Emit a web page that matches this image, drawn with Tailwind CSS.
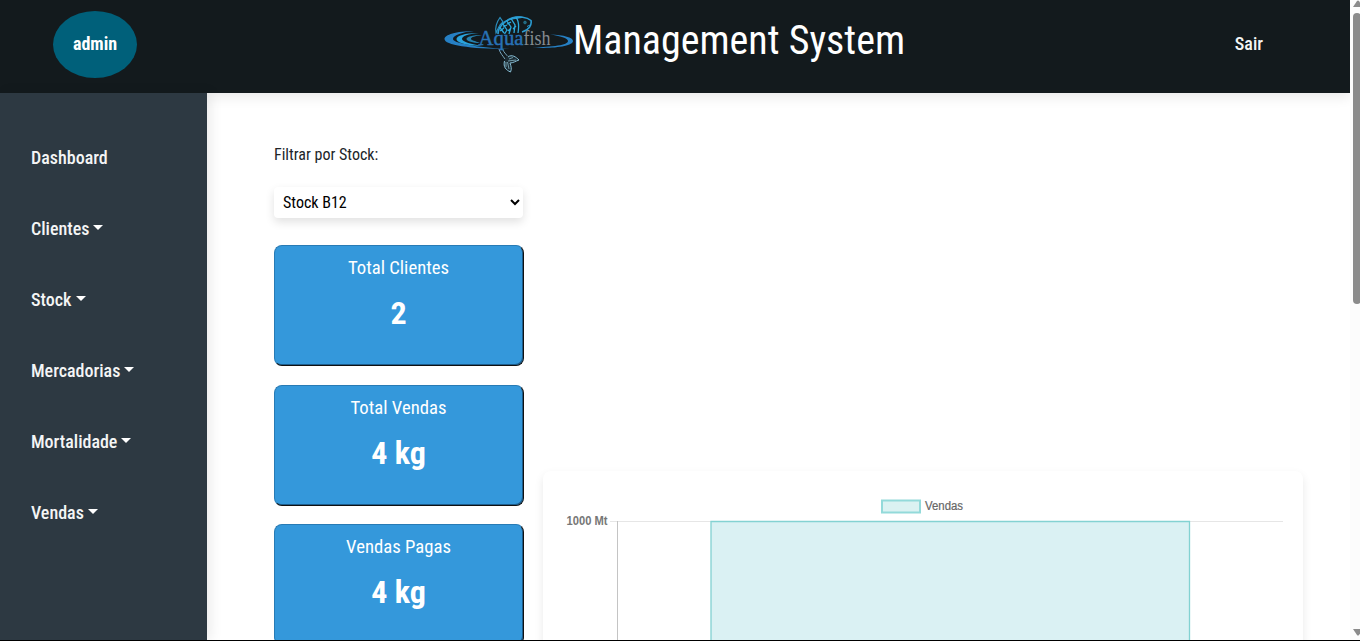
<!DOCTYPE html>
<html lang="pt">
<head>
<meta charset="utf-8">
<title>Management System</title>
<script src="https://cdn.jsdelivr.net/npm/@tailwindcss/browser@4"></script>
</head>
<body class="h-[641px] overflow-hidden bg-white font-['Roboto_Condensed','Roboto',sans-serif] [font-stretch:75%] text-[#212529]">
<div class="flex h-[641px] w-[1360px] border-b border-black">
  <div class="flex w-[1350px] flex-col overflow-hidden">
    <header class="relative z-10 flex h-[93px] shrink-0 bg-[#131a1d] pl-[53px] text-white shadow-[0_4px_12px_rgba(0,0,0,0.09)]">
      <div class="mt-[11px] flex h-[67px] w-[84px] items-center justify-center rounded-[50%] bg-[#00607a] pb-[2px] text-[18px] font-bold"><span>admin</span></div>
      <div class="ml-[306px] flex">
        <svg class="mt-3 h-[64px] w-[130px]" viewBox="443 12 130 64" fill="none">
          <path d="M474 31C456 31 444.500 35 444.500 39C444.500 45 469 49 510 49C485 48 453 44 453 39C453 35 463 32 474 31Z" fill="#2680c4"/>
          <path d="M479 33C464 33 456.500 36 456.500 39C456.500 43 469 46 482 46C472 44 462 42 462 39C462 36 468 34 479 33Z" fill="#2aa3dc"/>
          <path d="M482 35C472 35 466.500 37 466.500 39C466.500 41 473 43 480 43C475 41 471 40 471 39C471 37 475 36 482 35Z" fill="#2580ad"/>
          <path d="M550 34.500C564 35 573 37.500 573 41C573 46 554 49 532 47.500C553 47 568 45 568 41C568 38 560 36 550 34.500Z" fill="#2680c4"/>
          <path d="M498 34C498 28 503 21 512 18.500C519 16 527 17 531 20.500C532 25 529 30 522 32" stroke="#2b9bd1" stroke-width="1.600"/>
          <path d="M496 33C495 28 496 23 500 17.500L503 22L500 25C498 28 497 31 496 33Z" stroke="#2b8fbf" stroke-width="1.200"/>
          <path d="M506 21C509 17 517 14.500 525 17.500L512 19.500Z" fill="#2b9bd1"/>
          <path d="M499.500 27L504 33M502.500 23.500L507 30L504.500 34M506.500 20.500L511 27L509 34M511 18.500L515 25L514 33M500 31L504 28M503 27L507 25M507 24L511 22M508 31L511 28M513 29L516 26M516 17.500C519 21 519 27 518 33" stroke="#2ca9dc" stroke-width="1.300"/>
          <path d="M527 26.500L531 24.500" stroke="#2b9bd1" stroke-width="1"/>
          <circle cx="525" cy="22.500" r="1.400" fill="#24657c" stroke="#2489a8" stroke-width=".5"/>
          <path d="M499 49C500 53 503 56 505 59M502.500 49C504 53 507 55 509 58" stroke="#78a7bd" stroke-width="1"/>
          <path d="M506 57C510 53.500 514 55 519 60C516 61 513 63 510 63C511 66 512 69 510.500 72C506 70 502 66 505 59Z" fill="#1b2b33"/>
          <path d="M508 57C512 54 516 57 519 60C516 61 513 63 510 63C511 66 512 69 510.500 72C506 70 503 67 504.500 61" stroke="#88bed5" stroke-width="1"/>
          <path d="M508 61L516 60M509 59L513 57.500M507.500 62L509 69M506 62L506 67" stroke="#9acbdd" stroke-width=".7"/>
          <text y="44.500" font-family="Liberation Serif, serif"><tspan x="478.500" font-size="21.500" fill="#2872b5" stroke="#2872b5" stroke-width=".45" textLength="45" lengthAdjust="spacingAndGlyphs">Aqua</tspan><tspan x="523.500" font-size="20" fill="#858b90" textLength="27" lengthAdjust="spacingAndGlyphs">fish</tspan></text>
        </svg>
        <h1 class="mt-[17px] text-[40px] leading-[48px] font-normal whitespace-nowrap">Management System</h1>
      </div>
      <a class="mt-[30px] mr-[87px] ml-auto text-[18px] leading-[27px] font-medium text-[#f4f5f5]">Sair</a>
    </header>
    <div class="flex min-h-0 flex-1">
      <aside class="relative z-20 w-[207px] shrink-0 bg-[#2d3942] pt-[51px] pl-[31px] text-[18px] font-medium text-[#f4f5f5] shadow-[4px_0_12px_rgba(0,0,0,0.08)]">
        <nav class="flex flex-col gap-11 leading-[27px]">
          <a>Dashboard</a>
          <a class="flex items-center gap-1">Clientes<i class="-mt-[3px] border-x-[5px] border-t-[5px] border-x-transparent border-t-white"></i></a>
          <a class="flex items-center gap-[5px]">Stock<i class="-mt-[3px] border-x-[5px] border-t-[5px] border-x-transparent border-t-white"></i></a>
          <a class="flex items-center gap-1">Mercadorias<i class="-mt-[3px] border-x-[5px] border-t-[5px] border-x-transparent border-t-white"></i></a>
          <a class="flex items-center gap-1">Mortalidade<i class="-mt-[3px] border-x-[5px] border-t-[5px] border-x-transparent border-t-white"></i></a>
          <a class="flex items-center gap-1">Vendas<i class="-mt-[3px] border-x-[5px] border-t-[5px] border-x-transparent border-t-white"></i></a>
        </nav>
      </aside>
      <main class="flex flex-1 gap-[19px] pl-[67px]">
        <section class="w-[250px] shrink-0 pt-[50px]">
          <div class="text-[16px] leading-6">Filtrar por Stock:</div>
          <div class="mt-5 flex h-[31px] w-[249px] items-center justify-between rounded bg-white pr-[3px] pl-[9px] text-[16px] text-black shadow-[0_4px_10px_rgba(0,0,0,0.12)]">
            <span>Stock B12</span>
            <svg class="-mt-px size-[10px]" viewBox="0 0 10 10" fill="none"><path d="M1 3L5 7L9 3" stroke="#000" stroke-width="2"/></svg>
          </div>
          <div class="mt-[27px] flex flex-col gap-[18.500px] text-center text-white">
            <div class="h-[121px] rounded-lg border border-[#287bb5] border-r-[#111] border-b-[#111] bg-[#3498db] pt-[9px] pr-px shadow-[inset_-1px_-1px_0_#1d5d8c]"><div class="text-[18.720px] leading-[27px]">Total Clientes</div><div class="mt-[7px] text-[32px] leading-[48px] font-bold">2</div></div>
            <div class="h-[121px] rounded-lg border border-[#287bb5] border-r-[#111] border-b-[#111] bg-[#3498db] pt-[9px] pr-px shadow-[inset_-1px_-1px_0_#1d5d8c]"><div class="text-[18.720px] leading-[27px]">Total Vendas</div><div class="mt-[7px] text-[32px] leading-[48px] font-bold">4 kg</div></div>
            <div class="h-[121px] rounded-lg border border-[#287bb5] border-r-[#111] border-b-[#111] bg-[#3498db] pt-[9px] pr-px shadow-[inset_-1px_-1px_0_#1d5d8c]"><div class="text-[18.720px] leading-[27px]">Vendas Pagas</div><div class="mt-[7px] text-[32px] leading-[48px] font-bold">4 kg</div></div>
          </div>
        </section>
        <section class="mt-[378px] h-[400px] w-[760px] rounded-lg bg-white shadow-[0_4px_10px_rgba(0,0,0,0.09)]">
          <svg class="h-[170px] w-[760px]" viewBox="543 471 760 170" font-family="Liberation Sans, Arial, sans-serif" font-size="12" fill="#666">
            <rect x="882" y="500.500" width="38" height="12" fill="#dbf2f2" stroke="#93dada" stroke-width="2"/>
            <text x="925" y="510" stroke="#666" stroke-width=".2" textLength="38" lengthAdjust="spacingAndGlyphs">Vendas</text>
            <text x="566.500" y="525" font-weight="bold" fill="#777" textLength="41" lengthAdjust="spacingAndGlyphs">1000 Mt</text>
            <path d="M610 521.500H1283" stroke="#e6e6e6"/>
            <path d="M617.500 521V641" stroke="#c4c4c4"/>
            <path d="M711 641V521.500H1189.500V641" fill="#daf1f3" stroke="#83d2d2" stroke-width="1.300"/>
          </svg>
        </section>
      </main>
    </div>
  </div>
  <div class="relative w-[10px] bg-[#fcfcfc]">
    <svg class="h-[640px] w-[10px]" viewBox="0 0 10 640" fill="#8b8b8b"><path d="M3 7L7 1Q8 0 9 1L13 7Z"/><rect x="3" y="13" width="8" height="291" rx="4"/><path d="M3 629H13L9 635Q8 636 7 635Z"/></svg>
  </div>
</div>
</body>
</html>
